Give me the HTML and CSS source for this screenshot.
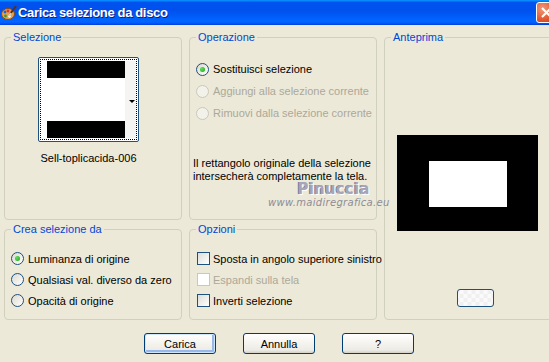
FILE: index.html
```html
<!DOCTYPE html>
<html lang="it">
<head>
    <meta charset="UTF-8">
    <meta name="viewport" content="width=device-width, initial-scale=1.0">
    <title>Carica selezione da disco</title>
    <link rel="stylesheet" href="styles.css">
</head>
<body>
    <div class="window">
        <div class="titlebar">
            <svg class="app-icon" width="16" height="16" viewBox="0 0 16 16">
                <ellipse cx="7" cy="9" rx="6.5" ry="5.5" fill="#e8a04a" stroke="#8a4a10" stroke-width="1"/>
                <circle cx="4" cy="7" r="1.4" fill="#2060e0"/>
                <circle cx="7" cy="6" r="1.4" fill="#e03030"/>
                <circle cx="4.5" cy="11" r="1.4" fill="#30a030"/>
                <circle cx="8.5" cy="11.5" r="1.2" fill="#ffffff"/>
                <path d="M15 1 L9 9" stroke="#5a3010" stroke-width="2"/>
                <path d="M10 8 L8 11" stroke="#d0d0d0" stroke-width="2"/>
            </svg>
            <span class="title">Carica selezione da disco</span>
            <div class="close">
                <svg width="21" height="21" viewBox="0 0 21 21">
                    <path d="M6 6 L15 15 M15 6 L6 15" stroke="#fff" stroke-width="2.2"/>
                </svg>
            </div>
        </div>

        <div class="content">
            <div class="groups">
                <div class="group group-sel">
                    <span class="legend">Selezione</span>
                    <div class="thumb">
                        <div class="thumb-focus">
                            <div class="thumb-img">
                                <div class="bar"></div>
                                <div class="gap"></div>
                                <div class="bar"></div>
                            </div>
                            <div class="thumb-side"><span class="arrow"></span></div>
                        </div>
                    </div>
                    <div class="sel-name">Sell-toplicacida-006</div>
                </div>

                <div class="group group-op">
                    <span class="legend">Operazione</span>
                    <div class="opt"><span class="radio checked"></span>Sostituisci selezione</div>
                    <div class="opt disabled"><span class="radio"></span>Aggiungi alla selezione corrente</div>
                    <div class="opt disabled"><span class="radio"></span>Rimuovi dalla selezione corrente</div>
                    <p class="desc">Il rettangolo originale della selezione<br>intersecherà completamente la tela.</p>
                </div>

                <div class="group group-prev">
                    <span class="legend">Anteprima</span>
                    <div class="preview">
                        <div class="preview-inner"></div>
                    </div>
                    <div class="mini-btn"></div>
                </div>

                <div class="group group-crea">
                    <span class="legend">Crea selezione da</span>
                    <div class="opt"><span class="radio checked"></span>Luminanza di origine</div>
                    <div class="opt"><span class="radio"></span>Qualsiasi val. diverso da zero</div>
                    <div class="opt"><span class="radio"></span>Opacità di origine</div>
                </div>

                <div class="group group-opz">
                    <span class="legend">Opzioni</span>
                    <div class="opt"><span class="check"></span>Sposta in angolo superiore sinistro</div>
                    <div class="opt disabled"><span class="check"></span>Espandi sulla tela</div>
                    <div class="opt"><span class="check"></span>Inverti selezione</div>
                </div>
            </div>

            <div class="buttons">
                <button class="btn default">Carica</button>
                <button class="btn">Annulla</button>
                <button class="btn">?</button>
            </div>
        </div>

        <div class="watermark">
            <div class="wm-name">Pinuccia</div>
            <div class="wm-url">www.maidiregrafica.eu</div>
        </div>
    </div>
</body>
</html>
```

FILE: styles.css
```css
body {
    margin: 0;
    font-family: 'Liberation Sans', Arial, sans-serif;
    font-size: 11px;
    color: #000;
    background: #ece9d8;
}

.window {
    position: relative;
    width: 549px;
    height: 362px;
    overflow: hidden;
    background: #ece9d8;
}

/* title bar */
.titlebar {
    position: relative;
    height: 25px;
    display: flex;
    align-items: center;
    background: linear-gradient(#0997ff, #0053ee 10%, #0050ee 40%, #0066ff 85%, #005bff 92%, #003dd7);
    color: #fff;
}

.app-icon {
    margin-left: 1px;
    flex: none;
}

.title {
    font-weight: bold;
    font-size: 13px;
    letter-spacing: -0.35px;
    text-shadow: 1px 1px 0 #0a1e8a;
    margin-left: 1px;
}

/* window is cut off on the right, so the close box sticks out */
.close {
    position: absolute;
    top: 2px;
    right: -8px;
    width: 21px;
    height: 21px;
    border: 1px solid #fff;
    border-radius: 3px;
    background: radial-gradient(circle at 30% 30%, #f09a7a, #e2552f 60%, #c13b14);
    box-sizing: border-box;
    overflow: hidden;
}

.close svg {
    display: block;
    margin: -1px;
}

/* body */
.content {
    padding: 12px 0 0 4px;
}

.groups {
    display: grid;
    grid-template-columns: 178px 188px 172px;
    grid-template-rows: 183px 91px;
    column-gap: 7px;
    row-gap: 9px;
}

.group {
    position: relative;
    border: 1px solid #d0d0bf;
    border-radius: 4px;
    box-sizing: border-box;
}

.legend {
    position: absolute;
    top: -8px;
    left: 6px;
    padding: 0 2px;
    background: #ece9d8;
    color: #0046d5;
    line-height: 14px;
}

/* Selezione */
.group-sel {
    display: flex;
    flex-direction: column;
    align-items: center;
    padding-right: 9px;
}

.thumb {
    margin-top: 19px;
    width: 101px;
    height: 85px;
    box-sizing: border-box;
    border: 1px solid #1c5180;
    border-radius: 2px;
    background: #fff;
    padding: 1px;
}

.thumb-focus {
    height: 100%;
    box-sizing: border-box;
    border: 1px dotted #000;
    display: flex;
    padding: 1px 0 1px 6px;
}

.thumb-img {
    width: 78px;
    display: flex;
    flex-direction: column;
}

.bar {
    height: 17px;
    background: #000;
}

.gap {
    flex: 1;
    background: #fff;
}

.thumb-side {
    flex: 1;
    background: #f4f4f2;
    display: flex;
    align-items: center;
    justify-content: flex-end;
    padding-right: 1px;
}

.arrow {
    width: 0;
    height: 0;
    border-left: 3px solid transparent;
    border-right: 3px solid transparent;
    border-top: 3px solid #000;
    margin-top: 3px;
}

.sel-name {
    margin-top: 9px;
    line-height: 14px;
}

/* options */
.opt {
    display: flex;
    align-items: center;
    white-space: nowrap;
}

.opt.disabled {
    color: #aca899;
}

.radio {
    width: 13px;
    height: 13px;
    box-sizing: border-box;
    border: 1px solid #1c5180;
    border-radius: 50%;
    background: linear-gradient(135deg, #dcd9cd, #ffffff);
    margin-right: 4px;
    position: relative;
    flex: none;
}

.radio.checked::after {
    content: "";
    position: absolute;
    left: 3px;
    top: 3px;
    width: 5px;
    height: 5px;
    border-radius: 50%;
    background: radial-gradient(circle at 35% 35%, #5de05d, #21a121);
}

.disabled .radio {
    border-color: #cac8bb;
    background: #f2f1ea;
}

.check {
    width: 13px;
    height: 13px;
    box-sizing: border-box;
    border: 1px solid #1c5180;
    background: linear-gradient(135deg, #dcdcd7, #ffffff);
    margin-right: 3px;
    flex: none;
}

.disabled .check {
    border-color: #cac8bb;
    background: #fff;
}

.group-op {
    padding: 20px 0 0 6px;
}

.group-op .opt {
    height: 22px;
}

.desc {
    margin: 33px 0 0 -3px;
    line-height: 13px;
}

/* Anteprima */
.group-prev {
    grid-row: 1 / span 2;
    grid-column: 3;
    padding: 97px 0 0 12px;
}

.preview {
    width: 141px;
    height: 96px;
    background: #000;
    box-sizing: border-box;
    padding: 26px 0 0 32px;
}

.preview-inner {
    width: 78px;
    height: 46px;
    background: #fff;
}

.mini-btn {
    margin: 58px 0 0 60px;
    width: 37px;
    height: 18px;
    box-sizing: border-box;
    border: 1px solid #1c5180;
    border-radius: 3px;
    background:
        repeating-conic-gradient(#f0f0f0 0 25%, #fafafa 0 50%) 50% 50% / 8px 8px;
}

/* Crea selezione da */
.group-crea {
    padding: 18px 0 0 6px;
}

.group-crea .opt {
    height: 21px;
}

/* Opzioni */
.group-opz {
    padding: 18px 0 0 7px;
}

.group-opz .opt {
    height: 21px;
}

/* buttons */
.buttons {
    display: flex;
    justify-content: center;
    gap: 27px;
    margin-top: 13px;
    padding-left: 5px;
}

.btn {
    width: 72px;
    height: 21px;
    padding: 0;
    font-family: 'Liberation Sans', Arial, sans-serif;
    font-size: 11px;
    color: #000;
    border: 1px solid #003c74;
    border-radius: 3px;
    background: linear-gradient(#ffffff, #f4f3ee 50%, #ecebe6 85%, #d6d0c5);
}

.btn.default {
    box-shadow: inset 0 0 0 1px #cee7ff, inset -1px -1px 0 2px #98b8ea;
}

/* watermark over the dialog */
.watermark {
    position: absolute;
    left: 268px;
    top: 182px;
    text-align: right;
    pointer-events: none;
}

.wm-name {
    font-family: 'DejaVu Sans', sans-serif;
    font-weight: bold;
    font-size: 15px;
    letter-spacing: 0.2px;
    color: #a6a6b8;
    text-shadow: 1px 1px 0 #ffffff, -1px 0 0 #7a7a90;
    margin-right: 20px;
    line-height: 14px;
}

.wm-url {
    font-family: 'DejaVu Sans', sans-serif;
    font-style: italic;
    font-size: 10px;
    color: #8c8c98;
    letter-spacing: 0.3px;
    line-height: 14px;
}
```
